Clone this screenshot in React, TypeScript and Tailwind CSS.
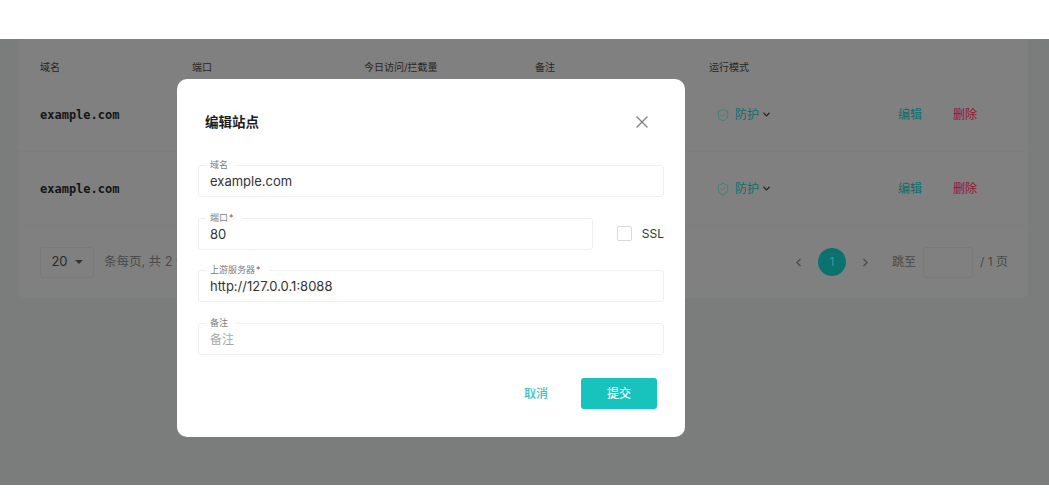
import React from 'react'
import { ChevronDown, ChevronLeft, ChevronRight, ShieldCheck, X } from 'lucide-react'

const cjk = '[font-family:Inter,"Noto_Sans_CJK_SC",sans-serif]'

const columns = [
  { label: '域名', width: 'w-[152px]' },
  { label: '端口', width: 'w-[172px]' },
  { label: '今日访问/拦截量', width: 'w-[171px]' },
  { label: '备注', width: 'w-[174px]' },
  { label: '运行模式', width: 'w-[120px]' },
]

const SiteRow = () => (
  <div className="flex h-[74px] items-center border-b border-[#7d7d7d] pl-[21px] pr-[51px] whitespace-nowrap">
    <span className="w-[670px] shrink-0 font-['DejaVu_Sans_Mono',monospace] text-xs font-bold text-[#151515]">example.com</span>
    <span className="flex w-[188px] shrink-0 items-center pl-[6px] text-xs text-[#0c6f6c]">
      <ShieldCheck size={14} strokeWidth={1.5} className="text-[#3d7f79]" />
      <span className="ml-[5px]">防护</span>
      <ChevronDown size={11} strokeWidth={3} className="ml-[2px] text-[#222]" />
    </span>
    <span className="w-[55px] shrink-0 text-xs text-[#0c6f6c]">编辑</span>
    <span className="text-xs text-[#8f1733]">删除</span>
  </div>
)

const Field = ({ label, required, value, placeholder, className = '' }: { label: string; required?: boolean; value?: string; placeholder?: string; className?: string }) => (
  <div className={`relative h-[32px] rounded-[3px] border border-[#efefef] pl-[11px] pt-[6px] text-[13px] leading-[18px] ${className}`}>
    <span className="absolute left-[7px] top-[-7px] flex h-[12px] items-center bg-white pl-[4px] pr-[8px] text-[9px] leading-[12px] text-[#808080]">
      {label}
      {required && <span className="ml-[1px] text-[#d0304f]">*</span>}
    </span>
    {value ? <span className="text-[#333]">{value}</span> : <span className="text-xs text-[#a8a8a8]">{placeholder}</span>}
  </div>
)

const App: React.FC = () => {
  return (
    <div className={`flex h-[500px] w-[1049px] flex-col overflow-hidden bg-white ${cjk}`}>
      <div className="h-[39px] shrink-0 bg-white" />

      <main className="relative h-[446px] shrink-0 bg-[#7b7c7c] px-[19px]">
        {/* Table card behind the dialog */}
        <section className="h-[259px] w-[1009px] rounded-b-md bg-[#808080]">
          <div className="flex h-[39px] items-end pb-[1px] pl-[21px] text-[10px] leading-[20px] text-[#262626]">
            {columns.map((c) => (
              <span key={c.label} className={c.width}>{c.label}</span>
            ))}
          </div>
          <SiteRow />
          <SiteRow />
          <div className="flex h-[72px] items-center pl-[21px] pr-[20px] text-xs text-[#4a4a4a]">
            <div className="flex h-[31px] w-[54px] items-center justify-center gap-[7px] rounded-[3px] border border-[#7a7a7a] text-[13px] text-[#2a2a2a]">
              20
              <span className="h-0 w-0 border-x-[4px] border-t-[4px] border-x-transparent border-t-[#333]" />
            </div>
            <span className="ml-[10px] text-[12.5px]">条每页, 共 2 条</span>
            <div className="ml-auto flex items-center">
              <ChevronLeft size={13} strokeWidth={2} />
              <span className="ml-[13px] flex h-[28px] w-[28px] items-center justify-center rounded-full bg-[#0c7270] text-xs text-[#3a9a97]">1</span>
              <ChevronRight size={13} strokeWidth={2} className="ml-[13px]" />
              <span className="ml-[20px]">跳至</span>
              <span className="ml-[7px] h-[31px] w-[50px] rounded-[3px] border border-[#7a7a7a]" />
              <span className="ml-[7px]">/ 1 页</span>
            </div>
          </div>
        </section>

        {/* Edit dialog */}
        <div className="absolute left-[177px] top-[40px] h-[358px] w-[508px] rounded-[10px] bg-white px-[21px]">
          <div className="flex h-[86px] items-center justify-between pl-[7px] pr-[12px]">
            <h2 className="text-[13.5px] font-bold text-[#1c1c1c]">编辑站点</h2>
            <X size={20} strokeWidth={1.5} className="text-[#808080]" />
          </div>
          <div className="flex flex-col gap-[20.5px]">
            <Field label="域名" value="example.com" />
            <div className="flex items-center">
              <Field label="端口" required value="80" className="w-[395px]" />
              <span className="ml-[24px] h-[15px] w-[15px] rounded-[2px] border border-[#d9d9d9]" />
              <span className="ml-[10px] text-xs text-[#333]">SSL</span>
            </div>
            <Field label="上游服务器" required value="http://127.0.0.1:8088" />
            <Field label="备注" placeholder="备注" />
          </div>
          <div className="mt-[23.5px] flex items-center justify-end pr-[7px]">
            <button className="mr-[33px] text-xs font-medium text-[#3cc4bf]">取消</button>
            <button className="h-[31px] w-[76px] rounded-[3px] bg-[#19c3bd] text-xs font-medium text-white">提交</button>
          </div>
        </div>
      </main>

      <div className="flex-1 bg-white" />
    </div>
  )
}

export default App
